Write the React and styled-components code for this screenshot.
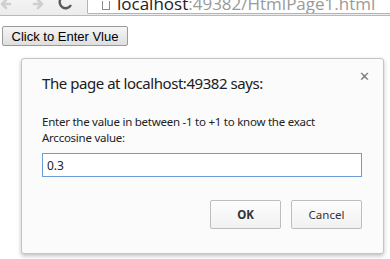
import React from "react";
import styled, { createGlobalStyle } from "styled-components";

const Global = createGlobalStyle`
  html, body { margin: 0; padding: 0; background: #fff; }
  body { width: 390px; height: 259px; overflow: hidden; font-family: "Liberation Sans", Arial, sans-serif; }
`;

const Page = styled.div`
  position: relative;
  width: 390px;
  height: 259px;
  overflow: hidden;
  background: #fff;
`;

const Chrome = styled.div`
  height: 16px;
  display: flex;
  align-items: flex-end;
  background: linear-gradient(#f3f3f3, #ececec);
  border-bottom: 1px solid #b9b9b9;
  box-sizing: border-box;
  overflow: hidden;
`;

const NavIcons = styled.div`
  width: 87px;
  height: 16px;
  display: flex;
  align-items: flex-start;
  overflow: hidden;
`;

const UrlBox = styled.div`
  flex: 1;
  height: 14px;
  margin-bottom: 1px;
  background: #fff;
  border: 1px solid #b4b4b4;
  border-top: none;
  border-right: none;
  border-radius: 0 0 0 2px;
  box-sizing: border-box;
  display: flex;
  align-items: flex-end;
  overflow: hidden;
`;

const PageIcon = styled.div`
  width: 6px;
  height: 8px;
  margin: 0 7px 3px 14px;
  border: 1px solid #8a8a8a;
  border-top: none;
  flex: none;
`;

const UrlText = styled.div`
  font-family: "Open Sans", "Noto Sans", sans-serif;
  font-size: 17px;
  line-height: 17px;
  margin-bottom: 1px;
  color: #9a9a9a;
  white-space: nowrap;
`;

const Host = styled.span`
  color: #222;
`;

const Content = styled.div`
  padding: 10px 0 0 2px;
`;

const PageButton = styled.button`
  font-family: "Liberation Sans", Arial, sans-serif;
  font-size: 13px;
  color: #000;
  height: 20px;
  width: 126px;
  padding: 0 6px;
  background: linear-gradient(#f6f6f6, #dedede);
  border: 1px solid #9a9a9a;
  border-radius: 2px;
  box-sizing: border-box;
`;

const Dialog = styled.div`
  position: absolute;
  left: 21px;
  top: 58px;
  width: 363px;
  height: 196px;
  box-sizing: border-box;
  background: #fbfbfb;
  border: 1px solid #c4c4c4;
  border-radius: 3px;
  box-shadow: 0 2px 4px rgba(0, 0, 0, 0.25);
  padding: 14px 22px 0 20px;
  font-family: "Noto Sans", "Open Sans", sans-serif;
  color: #222;
`;

const Close = styled.div`
  position: absolute;
  right: 13px;
  top: 10px;
  font-family: "DejaVu Sans", sans-serif;
  font-size: 13px;
  font-weight: bold;
  color: #777;
`;

const Title = styled.div`
  font-size: 15px;
  line-height: 20px;
  letter-spacing: -0.45px;
  color: #202020;
  margin-bottom: 21px;
`;

const Message = styled.div`
  font-size: 11.5px;
  line-height: 16px;
  letter-spacing: -0.25px;
  color: #222;
  margin-bottom: 7px;
`;

const Input = styled.input`
  display: block;
  width: 320px;
  height: 24px;
  box-sizing: border-box;
  border: 1px solid #6c9bd8;
  background: #fff;
  padding: 0 4px;
  font-family: "Noto Sans", "Open Sans", sans-serif;
  font-size: 12px;
  color: #222;
  outline: none;
`;

const Actions = styled.div`
  display: flex;
  justify-content: flex-end;
  gap: 10px;
  margin-top: 23px;
  margin-right: -1px;
`;

const DialogButton = styled.button`
  width: 71px;
  height: 29px;
  box-sizing: border-box;
  background: linear-gradient(#fdfdfd, #f1f1f1);
  border: 1px solid #bdbdbd;
  border-radius: 2px;
  font-family: "Noto Sans", "Open Sans", sans-serif;
  font-size: 11.5px;
  font-weight: ${(p) => (p.$primary ? 700 : 400)};
  color: #333;
  padding: 0;
`;

export default function App() {
  return (
    <Page>
      <Global />
      <Chrome>
        <NavIcons>
          <svg width="87" height="16" viewBox="0 0 87 16">
            <path d="M2 5 L10 5 M2 5 L6 1 M2 5 L6 9" stroke="#cfcfcf" strokeWidth="2.6" fill="none" strokeLinecap="round" />
            <path d="M42 5 L34 5 M42 5 L38 1 M42 5 L38 9" stroke="#cfcfcf" strokeWidth="2.6" fill="none" strokeLinecap="round" />
            <path d="M71 6 A6 6 0 1 1 70 -1" stroke="#5a5a5a" strokeWidth="2.4" fill="none" />
          </svg>
        </NavIcons>
        <UrlBox>
          <PageIcon />
          <UrlText>
            <Host>localhost</Host>:49382/HtmlPage1.html
          </UrlText>
        </UrlBox>
      </Chrome>
      <Content>
        <PageButton>Click to Enter Vlue</PageButton>
      </Content>
      <Dialog>
        <Close>✕</Close>
        <Title>The page at localhost:49382 says:</Title>
        <Message>
          Enter the value in between -1 to +1 to know the exact
          <br />
          Arccosine value:
        </Message>
        <Input defaultValue="0.3" />
        <Actions>
          <DialogButton $primary>OK</DialogButton>
          <DialogButton>Cancel</DialogButton>
        </Actions>
      </Dialog>
    </Page>
  );
}
